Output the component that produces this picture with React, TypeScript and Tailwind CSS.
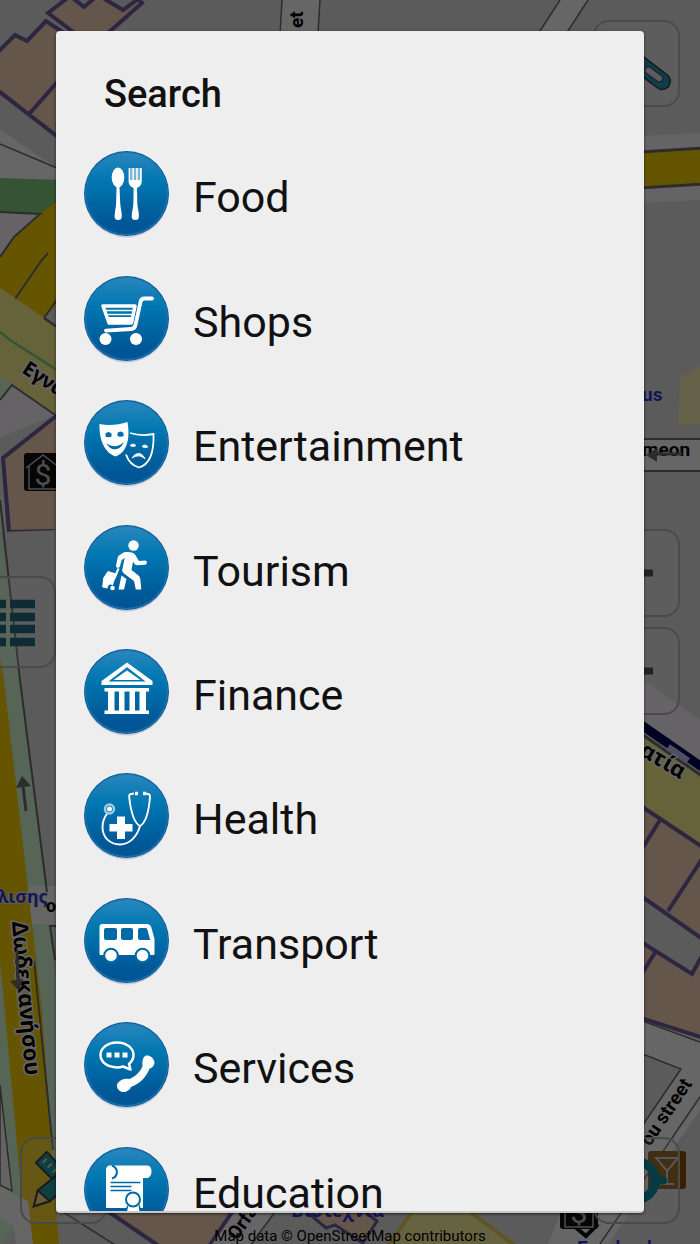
import React from "react";

type Category = { name: string; glyph: React.ReactNode };

const BLUE = "#006aa8";

// --- GLYPHS (drawn on an 86 x 86 disc) ---
const FoodGlyph = (
  <g fill="#fff">
    <ellipse cx="34" cy="26.5" rx="6.3" ry="10" />
    <path d="M32.6 34h2.8l.8 18c.2 5 1.800 9 1.600 13.500a3.400 3.400 0 0 1-7.200 0c0-4.500 1.400-8.500 1.500-13.500z" />
    <path d="M44.600 17h1.500v12h2.300V17h1.500v12h2.300V17h1.500v12H56V17h1.800v13c0 4-2.600 6-4.800 7l.3 15c.2 5 1.800 9 1.600 13.500a3.400 3.400 0 0 1-7.200 0c0-4.500 1.600-8.500 1.700-13.500l.2-15c-2.400-1-5-3-5-7z" />
    <path d="M46 17h10.500v12H46z" opacity=".45" />
  </g>
);

const CartGlyph = (
  <g fill="none" stroke="#fff">
    <path d="M19 30h32l-3.500 17H25z" strokeWidth="3.500" strokeLinejoin="round" />
    <path d="M22 34.500h27M24 38.500h24.500" strokeWidth="1.500" />
    <path d="M25 43h23M25 46h23" strokeWidth="4" />
    <path d="M68 22.500h-7.500c-2.500 0-3.500 1-4 3.500l-5 23c-.7 3-2 3.800-4.500 4l-25 1.600" strokeWidth="3.800" strokeLinecap="round" />
    <circle cx="21.500" cy="63" r="6" fill="#fff" stroke="none" />
    <circle cx="52" cy="63" r="6" fill="#fff" stroke="none" />
  </g>
);

const MasksGlyph = (
  <g>
    <path d="M15.500 24c9 2 19 1 28-2 2.500 14 1 30-12 34.500C19 52 15 37 15.500 24z" fill="#fff" />
    <path d="M21.500 33.500c2-2 4-2 6 0v3c-2 1-4 1-6 0zM33.500 33c2-2 4-2 6 0v3c-2 1-4 1-6 0z" fill={BLUE} />
    <path d="M22.500 43c5 4.500 12 4.500 17-1-2 8.500-13 10.500-17 1z" fill={BLUE} />
    <path d="M46 33c8 2.500 16 2.500 23.500 1 .5 15-2 30-14.500 33.500-7-2-11-7-13-13" fill="none" stroke="#fff" strokeWidth="1.800" />
    <path d="M46 45.500c2-2 4-2 6 0-2 1.500-4 1.500-6 0zM58 46.500c2-2 4-2 6 .5-2 1-4 1-6-.5z" fill="#fff" stroke="#fff" strokeWidth=".7" />
    <path d="M48 58c4-6 10-6 13 1-4-4-8-4-13-1z" fill="#fff" stroke="#fff" />
  </g>
);

const TravelGlyph = (
  <g fill="#fff">
    <circle cx="49.500" cy="20.500" r="5.200" />
    <path d="M38 28.500c3-2 10-2 13 1l4 6.500 6-.5c2.500 0 2.500 4 0 4.200l-7.500.5c-1.500 0-2.500-.5-3.200-1.700L49 36.500l-1.500 8.500 7 5.500c1 .8 1.600 2 1.800 3.500l1 10.500h-5.500l-1.800-8.500-10-7.500c-1.500-1.200-2-2.500-1.600-4.500l2.300-11-3 2-1.800 6.500c-.8 2.200-4.300 1.400-4-.8l1.700-7.600c.3-1.400 1-2.200 2.200-3z" />
    <path d="M37.500 50.500l5 3.500-2.500 10.500h-5.500z" />
    <path d="M33.500 43l2 .7-4 10-2-1z" />
    <path d="M24 46.500l8 2.500-3.500 11c-2-2-5-.5-5.300 3l-4.500-1 1-9z" strokeLinejoin="round" stroke="#fff" />
    <circle cx="28.500" cy="63" r="2.300" />
  </g>
);

const BankGlyph = (
  <g fill="#fff">
    <path fillRule="evenodd" d="M43 13.500L68.500 32v4h-51v-4zm0 4.500L24.500 32.500h37z" />
    <path d="M43 21.500L56.500 31h-27z" />
    <path d="M20.500 39h44.500v3.500H20.500zM20.500 61.500h44.500V65H20.500z" />
    <path d="M24 42h6.500v20H24zM35 42h5.500v20H35zM45.500 42h5.500v20h-5.500zM55.500 42H62v20h-6.500z" />
  </g>
);

const HealthGlyph = (
  <g fill="none" stroke="#fff" strokeWidth="1.900">
    <path d="M50 20.500l-3 .5c-1.500.3-2 1.300-1.800 3 1.300 12 4 25.500 10.800 29 6.500-3.500 9-17 10-29 0-1.700-.3-2.700-1.800-3l-3.700-.5" />
    <path d="M51 20.500h3M59 20.500h3" strokeWidth="3.500" />
    <path d="M56 53c-3 11-11 18.500-20 18.500-10 0-17.500-7-17.500-17.500 0-6 2-10 5-14" />
    <circle cx="25.500" cy="36" r="4.500" stroke="#9ccbe4" strokeWidth="2.500" />
    <circle cx="25.500" cy="36" r="2.500" fill="#fff" stroke="none" />
    <path d="M33 43.500h8v7.500h7.500v7.500H41V66h-8v-7.500h-7.500V51H33z" fill="#fff" stroke="none" />
  </g>
);

const BusGlyph = (
  <g>
    <path d="M18.500 26h44c2.500 0 4 1 4.700 3l3.300 12v14.500c0 1-.5 1.500-1.500 1.500H17c-1 0-1.500-.5-1.500-1.500V29c0-2 1-3 3-3z" fill="#fff" />
    <path d="M22 30h9a2 2 0 0 1 2 2v8a2 2 0 0 1-2 2h-9a2 2 0 0 1-2-2v-8a2 2 0 0 1 2-2zM39 30h8a2 2 0 0 1 2 2v8a2 2 0 0 1-2 2h-8a2 2 0 0 1-2-2v-8a2 2 0 0 1 2-2zM56 30h5c1.500 0 2 .5 2.500 2l2.700 10H56a2 2 0 0 1-2-2v-8a2 2 0 0 1 2-2z" fill={BLUE} />
    <g fill="#fff" stroke={BLUE} strokeWidth="2">
      <circle cx="27" cy="57.500" r="6.800" />
      <circle cx="58.500" cy="57.500" r="6.800" />
    </g>
  </g>
);

const PhoneGlyph = (
  <g>
    <path d="M39 44.500c-2 .6-4 .9-6 .9-9.500 0-16.500-5.400-16.500-12.400S23.500 20.500 33 20.500 49.500 26 49.500 33c0 3.500-1.700 6.600-4.500 8.900l1.500 5.600z" fill="none" stroke="#fff" strokeWidth="2.500" strokeLinejoin="round" />
    <path d="M22.500 30.500h5v5h-5zM30.500 30.500h5v5h-5zM38.500 30.500h5v5h-5z" fill="#fff" />
    <path d="M61 34c3-1.500 8 .5 9.500 6 0 4-3 6.500-5 6.500-3 8-9 15-18.500 18.500-1 3-5 5.500-8.500 5-4.500-1-6.500-5-5-8.500 2.500-4 7-5.500 12-4.500 6.500-3 11.500-8 13-13-.5-4 0-8 2.500-10z" fill="#fff" />
  </g>
);

const DiplomaGlyph = (
  <g>
    <path d="M26 18.500h38c4.500 1 5 10 0 12.500h-5v30H22V23c0-3 1.500-4.500 4-4.500z" fill="#fff" />
    <path d="M28 18.500c7 3 6 11 0 13" fill="none" stroke={BLUE} strokeWidth="2" />
    <path d="M26.500 35.500h30M26.500 39.500h21M26.500 43.500h21" stroke={BLUE} strokeWidth="1.700" />
    <path d="M44 57l-3 13 5-3 3 6 3-6 5 3-2-13z" fill="#fff" stroke={BLUE} strokeWidth="1.500" />
    <circle cx="49" cy="52.500" r="8.500" fill="#fff" />
    <circle cx="49" cy="52.500" r="7" fill="#fff" stroke={BLUE} strokeWidth="2" />
  </g>
);

const categories: Category[] = [
  { name: "Food", glyph: FoodGlyph },
  { name: "Shops", glyph: CartGlyph },
  { name: "Entertainment", glyph: MasksGlyph },
  { name: "Tourism", glyph: TravelGlyph },
  { name: "Finance", glyph: BankGlyph },
  { name: "Health", glyph: HealthGlyph },
  { name: "Transport", glyph: BusGlyph },
  { name: "Services", glyph: PhoneGlyph },
  { name: "Education", glyph: DiplomaGlyph },
];

const CategoryIcon = ({ children }: { children: React.ReactNode }) => (
  <svg viewBox="0 0 86 94" className="w-[86px] h-[94px] shrink-0" aria-hidden="true">
    <defs>
      <linearGradient id="disc" x1="0" y1="0" x2="0" y2="1">
        <stop offset="0" stopColor="#2a86bd" />
        <stop offset=".35" stopColor="#0077b1" />
        <stop offset=".85" stopColor="#005797" />
        <stop offset="1" stopColor="#005493" />
      </linearGradient>
    </defs>
    <circle cx="42.500" cy="44.500" r="42" fill="#9c9fc8" opacity=".5" />
    <circle cx="42.500" cy="42.500" r="42.500" fill="#0a5c9c" />
    <circle cx="42.500" cy="42.500" r="41" fill="url(#disc)" stroke="#1f7bae" strokeWidth="1" />
    {children}
  </svg>
);

// --- MAP BACKGROUND ---
const BankMarker = ({ x, y }: { x: number; y: number }) => (
  <g transform={`translate(${x} ${y})`}>
    <rect width="38" height="38" rx="3" fill="#111" />
    <path d="M2 15L19 2l17 13M5 13v23h28V13" fill="none" stroke="#c4c4c4" strokeWidth="1.500" />
    <text x="19" y="32" textAnchor="middle" fontSize="30" fill="#c4c4c4">$</text>
  </g>
);

const MapCanvas = () => (
  <svg
    viewBox="0 0 700 1244"
    preserveAspectRatio="xMidYMid slice"
    className="absolute inset-0 h-full w-full font-['Roboto','Noto_Sans',sans-serif]"
    aria-hidden="true"
  >
    <rect width="700" height="1244" fill="#e4e4e4" />

    {/* top left */}
    <g fill="#fad7b9" stroke="#735ca0" strokeWidth="4">
      <path d="M48 13L70-4l14 11L98-5l25 15L138-1l4 4-34 30-28 4z" />
      <path d="M-4 54l19-19 12 6 19-20 30 20v110L-4 89zM30 113l30-34" />
    </g>
    <path d="M0 130l57 38v12L0 178z" fill="#fff" />
    <path d="M0 144l57 24" stroke="#6e6e6e" strokeWidth="1.500" />
    <path d="M0 178l60 2v34L0 212z" fill="#82d282" />
    <path d="M0 213h45L14 237 0 257z" fill="#fff8ff" />
    <path d="M0 257l14-20 26-23 20-15v103L44 318 0 288z" fill="#ffd500" />
    <path d="M0 212l40 2-26 23L0 257M15 299l26-38 7-8M44 318l14-20" fill="none" stroke="#6e6e6e" strokeWidth="2" />
    <path d="M0 288l44 30 16 11v88L0 376z" fill="#fff591" />
    <path d="M0 332l10 8 50 32" fill="none" stroke="#82d282" strokeWidth="2.500" />
    <path d="M44 318l16 11" stroke="#6e6e6e" strokeWidth="2.500" />
    <path d="M0 376l12 9L0 400z" fill="#d7fcd7" />
    <path d="M0 400l12-15 45 30-57 22z" fill="#fff8ff" />
    <path d="M0 400l12-15 46 32" fill="none" stroke="#6e6e6e" strokeWidth="2" />
    <path d="M60 413L3 458l6 74 44-1 8 8z" fill="#fad7b9" stroke="#735ca0" strokeWidth="4" />
    <BankMarker x={24} y={453} />
    <text x="21" y="372" transform="rotate(33 21 372)" fontFamily="Noto Sans" fontSize="20" fontWeight="700" stroke="#fff" strokeWidth="3" paintOrder="stroke">Εγνατία</text>

    {/* left avenue */}
    <path d="M0 500l20 180 27 220h13v300H40L0 1244z" fill="#d7fcd7" />
    <path d="M20 680l27 200h13V530L0 532z" fill="#e4e4e4" />
    <path d="M-3 640l7 40 26 225 12 105 17 234H26L2 980-4 930z" fill="#ffd500" />
    <path d="M28 886h32v38H32z" fill="#fff" />
    <path d="M50 926h10v50h-5z" fill="#e4e4e4" />
    <path d="M0 500l20 180 27 212M59 926h-9l5 34M34 960l19 190" fill="none" stroke="#6e6e6e" strokeWidth="2" />
    <path d="M26 811l-3-25" stroke="#6e6e6e" strokeWidth="3" />
    <path d="M22 776l-6 12 15-2z" fill="#6e6e6e" />
    <path d="M0 1085l12 106-12-6z" fill="#fff8ff" stroke="#6e6e6e" strokeWidth="1.500" />
    <path d="M0 1187l28 14 5 43H16l-2-18-14-7z" fill="#fff" />
    <text x="-2" y="903" fontFamily="Noto Sans" fontSize="18" fontWeight="700" fill="#3939d8" stroke="#eee" strokeWidth="2" paintOrder="stroke">λισης</text>
    <text x="46" y="912" fontSize="18" fontWeight="700">ο:</text>
    <text x="12" y="922" transform="rotate(85 12 922)" fontFamily="Noto Sans" fontSize="22" fontWeight="700" stroke="#fff" strokeWidth="3" paintOrder="stroke">Δωδεκανήσου</text>
    <path d="M17 950l1 34" stroke="#6e6e6e" strokeWidth="3" />
    <path d="M10 981l13-2-4 12z" fill="#6e6e6e" />

    {/* top edge */}
    <path d="M282 0h38l-3 34h-38z" fill="#fff" />
    <path d="M282 0l-2 34M320 0l-2 34" stroke="#6e6e6e" strokeWidth="1.500" />
    <text x="303" y="28" transform="rotate(-90 303 28)" fontSize="19" fontWeight="700">et</text>
    <path d="M560 0h28l-22 34h-28z" fill="#fff" />
    <path d="M560 0l-22 34M588 0l-22 34" stroke="#6e6e6e" strokeWidth="1.500" />

    {/* right side */}
    <path d="M640 136l60-3v67l-60 3z" fill="#fff8ff" />
    <path d="M640 152l62-4v36l-62 4z" fill="#ffd500" stroke="#6e6e6e" strokeWidth="3" />
    <text x="642" y="401" fontSize="19" fontWeight="700" fill="#3939d8">us</text>
    <path d="M680 377l20-11v59h-22z" fill="#fff8a0" opacity=".7" />
    <path d="M640 439h62v32h-62z" fill="#fff" stroke="#6e6e6e" strokeWidth="2" />
    <text x="642" y="456" fontSize="19" fontWeight="700">meon</text>
    <path d="M654 454h28" stroke="#6e6e6e" strokeWidth="3" />
    <path d="M646 455l11-7v14z" fill="#6e6e6e" />
    <path d="M640 678l60 42v42l-60-42z" fill="#fff8ff" />
    <path d="M640 734l60 41v70l-60-41z" fill="#fff591" />
    <path d="M640 724l62 43" stroke="#00005a" strokeWidth="9" />
    <path d="M640 733l62 43" stroke="#6e6e6e" strokeWidth="3" />
    <path d="M668 747l20 14" stroke="#c5c5f5" strokeWidth="7" />
    <text x="628" y="748" transform="rotate(31 628 748)" fontFamily="Noto Sans" fontSize="22" fontWeight="700" stroke="#fff" strokeWidth="3" paintOrder="stroke">νατία</text>
    <g fill="#fad7b9" stroke="#735ca0" strokeWidth="4">
      <path d="M638 804l66 44v92l-66-46z" />
      <path d="M660 820l-20 32M668 911l36-55" />
      <path d="M638 940l54 34 12-22v86l-66-21z" />
      <path d="M656 951l-20 32" />
    </g>
    <path d="M640 1020l60 20v70l-92 134h-60z" fill="#fff" />
    <path d="M640 1053l41 16-41 60z" fill="#e4e4e4" />
    <path d="M640 1053l41 16-41 60M702 1094l-102 150M640 1020l60 22" fill="none" stroke="#6e6e6e" strokeWidth="1.500" />
    <text x="650" y="1147" transform="rotate(-56 650 1147)" fontSize="19" fontWeight="700" stroke="#fff" strokeWidth="2" paintOrder="stroke">ou street</text>
    <rect x="648" y="1151" width="38" height="38" rx="3" fill="#8c5000" />
    <path d="M656 1158h22l-11 13zM667 1171v12M660 1184h14" fill="none" stroke="#d8d0c8" strokeWidth="2" />

    {/* bottom edge */}
    <path d="M100 1206l62 42h46l28-42z" fill="#fad7b9" stroke="#735ca0" strokeWidth="4" />
    <path d="M60 1210l22 14 38 24" stroke="#6e6e6e" strokeWidth="1.500" />
    <path d="M240 1206h38l-28 38h-38z" fill="#fff" />
    <path d="M278 1208l-28 38" stroke="#6e6e6e" strokeWidth="1.500" />
    <path d="M300 1206l26 22 9-3 28 18 14-22-20-15z" fill="#fad7b9" stroke="#735ca0" strokeWidth="3" />
    <path d="M416 1206h46l54 40H388z" fill="#fff8a0" stroke="#f0d060" strokeWidth="4" />
    <text x="237" y="1241" transform="rotate(-55 237 1241)" fontSize="19" fontWeight="700" stroke="#fff" strokeWidth="2" paintOrder="stroke">Orfa</text>
    <text x="291" y="1217" fontFamily="Noto Sans" fontSize="19" fontWeight="700" fill="#3939d8">Βιοτεχνία</text>
    <path d="M574 1226l12 10 12-12" fill="none" stroke="#111" strokeWidth="4" />
    <BankMarker x={560} y={1191} />
    <text x="577" y="1254" fontSize="19" fontWeight="700" fill="#3939d8">Eurobank</text>
  </svg>
);

const controlClass =
  "absolute flex items-center rounded-2xl border-2 border-[#b8b8b8] bg-white/20 overflow-hidden";

const MapControls = () => (
  <>
    <button type="button" aria-label="Settings" className={`${controlClass} right-5 top-5 h-[87px] w-[87px]`}>
      <svg viewBox="0 0 84 84" className="h-full w-full">
        <path d="M34 34l34 26" stroke="#3a3a3a" strokeWidth="18" strokeLinecap="round" />
        <path d="M34 34l34 26" stroke="#259abc" strokeWidth="15" strokeLinecap="round" />
        <path d="M54 49l11 8" stroke="#444" strokeWidth="8" strokeLinecap="round" />
        <path d="M54 49l11 8" stroke="#e6e6e6" strokeWidth="6" strokeLinecap="round" />
      </svg>
    </button>
    <button type="button" aria-label="Zoom in" className={`${controlClass} right-5 top-[529px] h-[88px] w-[88px]`}>
      <svg viewBox="0 0 84 84" className="h-full w-full">
        <path d="M25 42h34M42 25v34" stroke="#585858" strokeWidth="7" />
      </svg>
    </button>
    <button type="button" aria-label="Zoom out" className={`${controlClass} right-5 top-[627px] h-[88px] w-[88px]`}>
      <svg viewBox="0 0 84 84" className="h-full w-full">
        <path d="M25 42h34" stroke="#585858" strokeWidth="7" />
      </svg>
    </button>
    <button type="button" aria-label="Menu" className={`${controlClass} -left-8 top-[576px] h-[92px] w-[88px]`}>
      <svg viewBox="0 0 84 88" className="h-full w-full">
        <path d="M20 26h16M20 39h16M20 51h16M20 64h16M40 26h25M40 39h25M40 51h25M40 64h25" stroke="#266e88" strokeWidth="8.500" />
      </svg>
    </button>
    <button type="button" aria-label="Edit" className={`${controlClass} bottom-5 left-5 h-[87px] w-[87px]`}>
      <svg viewBox="0 0 84 84" className="h-full w-full">
        <path d="M14 24l11-11 46 48-10 10z" fill="#25a0a4" stroke="#444" strokeWidth="2" />
        <path d="M21 24l4-4M26 29l4-4M31 34l4-4" stroke="#ddd" strokeWidth="2" />
        <path d="M12 68l4-16 42-34 10 12-40 33z" fill="#25a0a4" stroke="#444" strokeWidth="2" />
        <path d="M12 68l4-16 12 11z" fill="#ffe680" stroke="#444" strokeWidth="2" />
      </svg>
    </button>
    <button type="button" aria-label="My location" className={`${controlClass} bottom-5 right-5 h-[87px] w-[87px]`}>
      <svg viewBox="0 0 84 84" className="h-full w-full">
        <circle cx="42" cy="42" r="19" fill="none" stroke="#0e93ac" strokeWidth="9" />
        <path d="M63 42h6M15 42h6M42 15v6M42 63v6" stroke="#0e93ac" strokeWidth="8" strokeLinecap="round" />
      </svg>
    </button>
    <p className="absolute inset-x-0 bottom-0 text-center text-[15px] leading-4 text-black">
      Map data © OpenStreetMap contributors
    </p>
  </>
);

const SearchDialog = () => (
  <section
    role="dialog"
    aria-labelledby="search-title"
    className="relative flex min-h-0 flex-1 flex-col overflow-hidden rounded-[4px] border-b-2 border-[#c8c8c8] bg-[#eeeeee] text-[#111111] shadow-[0_1px_3px_rgba(0,0,0,0.6)]"
  >
    <h1 id="search-title" className="shrink-0 px-12 pt-10 pb-[19px] text-[38px] leading-[46px] font-medium">
      Search
    </h1>
    <div className="min-h-0 flex-1 overflow-y-auto [scrollbar-width:none]">
      <ul className="grid h-[1120px] auto-rows-fr">
        {categories.map((category) => (
          <li key={category.name} className="flex">
            <button type="button" className="flex w-full items-center gap-[23px] px-7 text-left">
              <CategoryIcon>{category.glyph}</CategoryIcon>
              <span className="pb-0.5 text-[43px] leading-[48px]">{category.name}</span>
            </button>
          </li>
        ))}
      </ul>
    </div>
  </section>
);

export default function App() {
  return (
    <main className="relative flex h-screen flex-col overflow-hidden px-14 py-[31px] font-['Roboto',sans-serif]">
      <MapCanvas />
      <MapControls />
      <div className="absolute inset-0 bg-black/60" />
      <SearchDialog />
    </main>
  );
}
